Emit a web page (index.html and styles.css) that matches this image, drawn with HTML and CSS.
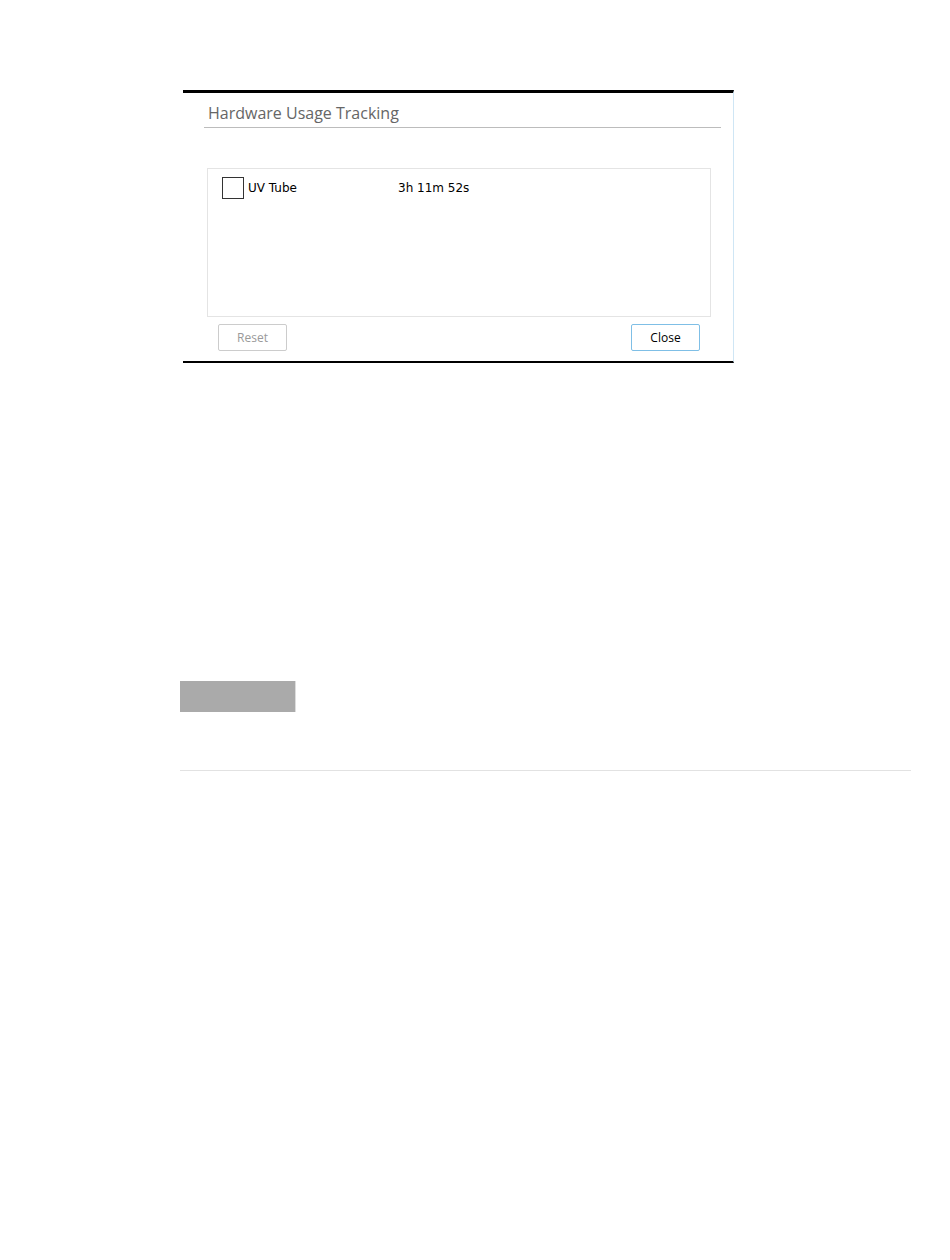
FILE: index.html
```html
<!DOCTYPE html>
<html lang="en">
<head>
    <meta charset="UTF-8">
    <meta name="viewport" content="width=device-width, initial-scale=1.0">
    <title>Hardware Usage Tracking</title>
    <link rel="stylesheet" href="styles.css">
</head>
<body>
    <div class="page">
        <div class="dialog">
            <h1 class="dialog-title">Hardware Usage Tracking</h1>
            <div class="usage-list">
                <div class="usage-row">
                    <span class="check"></span>
                    <span class="usage-name">UV Tube</span>
                    <span class="usage-time">3h 11m 52s</span>
                </div>
            </div>
            <div class="dialog-buttons">
                <button class="btn btn-disabled" disabled>Reset</button>
                <button class="btn btn-default">Close</button>
            </div>
        </div>

        <div class="gray-block"></div>
        <div class="rule"></div>
    </div>
</body>
</html>
```

FILE: styles.css
```css
* {
    margin: 0;
    padding: 0;
    box-sizing: border-box;
}

body {
    background-color: #fff;
    font-family: 'DejaVu Sans', sans-serif;
}

.page {
    padding-top: 90px;
    padding-left: 180px;
}

.dialog {
    margin-left: 3px;
    width: 551px;
    height: 273px;
    border-top: 3px solid #000;
    border-bottom: 2px solid #000;
    border-right: 1px solid #cfe6f5;
    display: flex;
    flex-direction: column;
}

.dialog-title {
    margin: 0 12px 0 21px;
    padding: 10px 0 4px 4px;
    border-bottom: 1px solid #bcbcbc;
    font-family: 'Open Sans', sans-serif;
    font-weight: 400;
    font-size: 16px;
    line-height: 20px;
    color: #666;
}

.usage-list {
    margin: 40px 22px 0 24px;
    height: 149px;
    border: 1px solid #e4e4e4;
    padding: 8px 14px;
}

.usage-row {
    display: flex;
    align-items: center;
    font-size: 12px;
    color: #000;
}

.check {
    width: 22px;
    height: 22px;
    border: 1px solid #333;
    margin-right: 4px;
}

.usage-name {
    width: 150px;
}

.dialog-buttons {
    display: flex;
    justify-content: space-between;
    margin: 7px 33px 0 35px;
}

.btn {
    width: 69px;
    height: 27px;
    background-color: #fff;
    border-radius: 2px;
    font-family: 'Open Sans', sans-serif;
    font-size: 12px;
}

.btn-disabled {
    border: 1px solid #cccccc;
    color: #9a9a9a;
}

.btn-default {
    border: 1px solid #7fbfe6;
    color: #000;
}

.gray-block {
    margin-top: 318px;
    width: 116px;
    height: 31px;
    background-color: #aaaaaa;
    border-right: 1px solid #ddd;
}

.rule {
    margin-top: 58px;
    width: 731px;
    height: 1px;
    background-color: #e2e2e2;
}
```
